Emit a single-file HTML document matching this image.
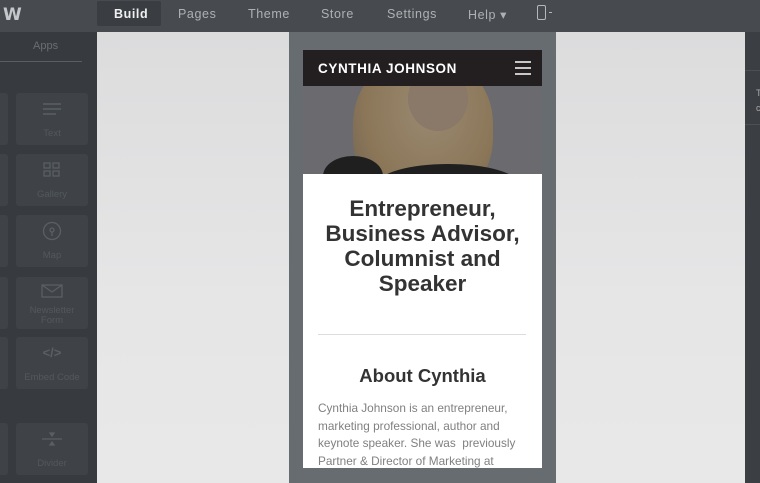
<!DOCTYPE html>
<html><head><style>
*{margin:0;padding:0;box-sizing:border-box}
body{width:760px;height:483px;overflow:hidden;background:#3b3f43;font-family:"Liberation Sans",sans-serif;position:relative}
.top{position:absolute;left:0;top:0;width:760px;height:32px;background:#474b4f}
.nav{position:absolute;top:7px;color:#aeb1b4;font-size:12.5px;letter-spacing:.6px}
.build{position:absolute;left:97px;top:1px;width:64px;height:25px;background:#3a3e42;border-radius:2px}
.side{position:absolute;left:0;top:32px;width:97px;height:451px;background:#373b3f}
.tile{position:absolute;left:16px;width:72px;height:52px;background:#3f4347;border-radius:3px;color:#53585c;font-size:9.5px;text-align:center}
.tile span{position:absolute;left:0;right:0;bottom:6px;line-height:10px}
.lt{position:absolute;left:0;width:8px;height:52px;background:#3f4347;border-radius:0 3px 3px 0}
.canvas{position:absolute;left:97px;top:32px;width:648px;height:451px;background:linear-gradient(180deg,#dcdcdd 0%,#e6e6e7 60%,#e8e8e8 100%)}
.mid{position:absolute;left:289px;top:32px;width:267px;height:451px;background:#676c71}
.phone{position:absolute;left:303px;top:50px;width:239px;height:418px;background:#fff;overflow:hidden}
.hdr{height:36px;background:#231f20;color:#fff;font-weight:bold;font-size:13.5px;letter-spacing:.6px;padding:11px 0 0 15px;position:relative}
.img{height:88px;background:#6a6a6f;position:relative;overflow:hidden}
h1{font-size:22.5px;line-height:25px;text-align:center;color:#333;margin-top:22px;font-weight:bold}
.rule{position:absolute;left:15px;top:284px;width:208px;height:1px;background:#ddd}
h2{position:absolute;left:0;right:0;top:315px;text-align:center;font-size:18.5px;color:#333;font-weight:bold}
.p{position:absolute;left:15px;top:350px;width:215px;font-size:11.8px;line-height:17.5px;color:#808080}
.right{position:absolute;left:745px;top:32px;width:15px;height:451px;background:#3b3f43}
</style></head><body>
<div class="top">
<div style="position:absolute;left:3px;top:5px;color:#c5c8cb;font-weight:bold;font-size:17px;font-family:'DejaVu Sans',sans-serif">W</div>
<div class="build"></div>
<div class="nav" style="left:114px;color:#f0f0f0;font-weight:bold">Build</div>
<div class="nav" style="left:178px">Pages</div>
<div class="nav" style="left:248px">Theme</div>
<div class="nav" style="left:321px">Store</div>
<div class="nav" style="left:387px">Settings</div>
<div class="nav" style="left:468px">Help ▾</div>
<div style="position:absolute;left:537px;top:5px;width:9px;height:15px;border:1.5px solid #b5b8bb;border-radius:2px"></div>
<div style="position:absolute;left:549px;top:12px;width:3px;height:1px;background:#b5b8bb"></div>
</div>
<div class="side">
<div style="position:absolute;left:33px;top:8px;color:#6a6e72;font-size:11px">Apps</div>
<div style="position:absolute;left:0;top:29px;width:82px;height:1px;background:#5a5e62"></div>
</div>
<div class="lt" style="top:93px"></div><div class="lt" style="top:154px"></div><div class="lt" style="top:215px"></div><div class="lt" style="top:277px"></div><div class="lt" style="top:337px"></div><div class="lt" style="top:423px"></div>
<div class="tile" style="top:93px"><svg width="20" height="14" style="margin-top:9px" stroke="#5a5f63" stroke-width="1.5"><path d="M1 2H19M1 7H19M1 12H14"/></svg><span>Text</span></div>
<div class="tile" style="top:154px"><svg width="20" height="16" style="margin-top:8px" stroke="#5a5f63" stroke-width="1.3" fill="none"><rect x="2" y="1" width="6" height="5"/><rect x="11" y="1" width="6" height="5"/><rect x="2" y="9" width="6" height="5"/><rect x="11" y="9" width="6" height="5"/></svg><span>Gallery</span></div>
<div class="tile" style="top:215px"><svg width="20" height="20" style="margin-top:6px" stroke="#5a5f63" stroke-width="1.3" fill="none"><circle cx="10" cy="10" r="8.5"/><circle cx="10" cy="9" r="2"/><path d="M10 11V15"/></svg><span>Map</span></div>
<div class="tile" style="top:277px"><svg width="22" height="14" style="margin-top:7px" stroke="#5a5f63" stroke-width="1.3" fill="none"><rect x="1" y="1" width="20" height="12"/><path d="M1 1L11 8L21 1"/></svg><span style="bottom:3px">Newsletter<br>Form</span></div>
<div class="tile" style="top:337px"><div style="color:#5a5f63;font-size:13px;margin-top:8px;font-weight:bold">&lt;/&gt;</div><span>Embed Code</span></div>
<div class="tile" style="top:423px"><svg width="22" height="14" style="margin-top:9px" stroke="#5a5f63" stroke-width="1.3" fill="#5a5f63"><path d="M1 7H21" fill="none"/><path d="M9 1H13L11 4Z M9 13H13L11 10Z"/></svg><span>Divider</span></div>
<div class="canvas"></div>
<div class="mid"></div>
<div class="phone">
<div class="hdr">CYNTHIA JOHNSON
<svg width="18" height="16" style="position:absolute;right:10px;top:10px" stroke="#fff" stroke-width="1.6"><path d="M1 2H17M1 8H17M1 14H17"/></svg></div>
<div class="img">
<div style="position:absolute;left:50px;top:-30px;width:140px;height:150px;border-radius:45%;background:radial-gradient(ellipse at 55% 35%,#9a8a72,#8b7658 60%,#7a6a55 80%)"></div>
<div style="position:absolute;left:105px;top:-20px;width:60px;height:65px;border-radius:50%;background:#8a7868"></div>
<div style="position:absolute;left:75px;top:78px;width:140px;height:40px;border-radius:50% 50% 0 0;background:#1f1f20"></div>
<div style="position:absolute;left:20px;top:70px;width:60px;height:40px;border-radius:60% 60% 0 0;background:#1f1f20"></div>
</div>
<h1>Entrepreneur,<br>Business Advisor,<br>Columnist and<br>Speaker</h1>
<div class="rule"></div>
<h2>About Cynthia</h2>
<div class="p">Cynthia Johnson is an entrepreneur, marketing professional, author and keynote speaker. She was &nbsp;previously Partner &amp; Director of Marketing at</div>
</div>
<div class="right">
<div style="position:absolute;left:0;top:38px;width:15px;height:1px;background:#4c5054"></div>
<div style="position:absolute;left:0;top:92px;width:15px;height:1px;background:#4c5054"></div>
<div style="position:absolute;left:11px;top:54px;color:#aaa;font-size:9px;line-height:15px">T<br>c</div>
</div>
</body></html>
